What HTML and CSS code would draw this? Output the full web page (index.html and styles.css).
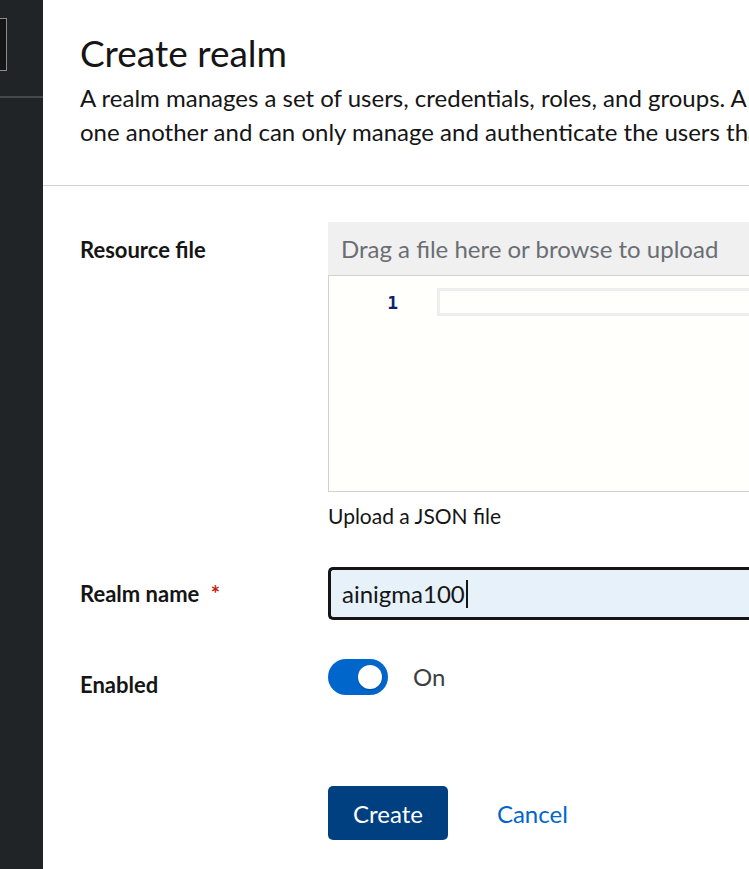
FILE: index.html
```html
<!DOCTYPE html>
<html lang="en">
<head>
<meta charset="utf-8">
<title>Create realm</title>
<link rel="stylesheet" href="styles.css">
</head>
<body>
<div class="app">
  <aside class="sidebar">
    <div class="brand-box"></div>
    <div class="sidebar-rule"></div>
  </aside>
  <main class="main">
    <div class="page">
      <header class="page-header">
        <h1 class="title">Create realm</h1>
        <p class="description">A realm manages a set of users, credentials, roles, and groups. A user belongs to and logs into a realm. Realms are isolated from<br>one another and can only manage and authenticate the users that they control.</p>
      </header>
      <section class="page-body">
        <form class="form">
          <div class="form-row">
            <label class="form-label">Resource file</label>
            <div class="form-control">
              <div class="file-upload">
                <div class="file-input">Drag a file here or browse to upload</div>
                <div class="editor">
                  <div class="gutter"><span class="line-number">1</span></div>
                  <div class="editor-lines"><div class="active-line"></div></div>
                </div>
              </div>
              <div class="helper">Upload a JSON file</div>
            </div>
          </div>
          <div class="form-row">
            <label class="form-label label-input">Realm name <span class="required">*</span></label>
            <div class="form-control">
              <div class="text-input"><span class="value">ainigma100</span><span class="caret"></span></div>
            </div>
          </div>
          <div class="form-row">
            <label class="form-label label-switch">Enabled</label>
            <div class="form-control">
              <div class="switch">
                <span class="toggle"><span class="knob"></span></span>
                <span class="switch-label">On</span>
              </div>
            </div>
          </div>
          <div class="form-row actions-row">
            <div></div>
            <div class="actions">
              <button type="button" class="btn btn-primary">Create</button>
              <button type="button" class="btn btn-link">Cancel</button>
            </div>
          </div>
        </form>
      </section>
    </div>
  </main>
</div>
</body>
</html>
```
FILE: styles.css
```css
html, body {
  margin: 0;
  padding: 0;
  height: 100%;
  overflow: hidden;
  background: #ffffff;
}

body {
  font-family: "Lato", "Open Sans", sans-serif;
  color: #151515;
}

.app {
  display: flex;
  height: 100vh;
}

.sidebar {
  width: 43px;
  flex: 0 0 43px;
  background: #212427;
  display: flex;
  flex-direction: column;
}

.brand-box {
  margin-top: 18px;
  width: 6px;
  height: 51px;
  background: #151515;
  border: 1px solid #8a8d90;
  border-left: none;
}

.sidebar-rule {
  margin-top: 25px;
  height: 2px;
  background: #45484b;
}

.main {
  flex: 1;
  min-width: 0;
  overflow: hidden;
}

.page {
  width: 1400px;
}

.page-header {
  padding: 30px 37px 36px;
  border-bottom: 1px solid #d2d2d2;
}

.title {
  margin: 0;
  font-size: 37px;
  font-weight: 400;
  line-height: 46px;
}

.description {
  margin: 5px 0 0;
  font-size: 24px;
  line-height: 34px;
  white-space: nowrap;
}

.page-body {
  padding: 36px 37px;
}

.form {
  display: flex;
  flex-direction: column;
  gap: 36px;
}

.form-row {
  display: grid;
  grid-template-columns: 224px 1fr;
  column-gap: 24px;
  align-items: start;
}

.form-label {
  font-size: 22px;
  font-weight: 700;
  line-height: 31px;
  padding-top: 12px;
}

.label-input {
  padding-top: 11px;
}

.label-switch {
  padding-top: 13px;
}

.required {
  color: #c9190b;
  margin-left: 6px;
}

.file-upload {
  display: flex;
  flex-direction: column;
}

.file-input {
  height: 53px;
  background: #f0f0f0;
  color: #6a6e73;
  font-size: 24px;
  line-height: 53px;
  padding-left: 13px;
  box-sizing: border-box;
}

.editor {
  height: 217px;
  box-sizing: border-box;
  border: 1px solid #d2d2d2;
  background: #fffffc;
  display: flex;
}

.gutter {
  width: 108px;
  flex: 0 0 108px;
  padding-top: 13px;
  box-sizing: border-box;
  text-align: right;
  padding-right: 39px;
}

.line-number {
  font-family: "DejaVu Sans Mono", "Liberation Mono", monospace;
  font-size: 18px;
  font-weight: 700;
  line-height: 28px;
  color: #0b216f;
}

.editor-lines {
  flex: 1;
  padding-top: 12px;
}

.active-line {
  height: 28px;
  box-sizing: border-box;
  border: 3px solid #eeeeee;
  border-right: none;
}

.helper {
  font-size: 21px;
  line-height: 31px;
  margin-top: 8px;
  color: #151515;
}

.text-input {
  height: 53px;
  box-sizing: border-box;
  background: #e7f1fa;
  border: 3px solid #151515;
  border-right: none;
  border-radius: 5px 0 0 5px;
  padding-left: 11px;
  display: flex;
  align-items: center;
  font-size: 24px;
}

.caret {
  display: inline-block;
  width: 2px;
  height: 28px;
  background: #151515;
  margin-left: 1px;
}

.switch {
  display: flex;
  align-items: center;
  gap: 25px;
  margin-top: 3px;
}

.toggle {
  position: relative;
  width: 60px;
  height: 36px;
  border-radius: 18px;
  background: #0066cc;
  display: inline-block;
}

.knob {
  position: absolute;
  top: 6px;
  right: 6px;
  width: 24px;
  height: 24px;
  border-radius: 50%;
  background: #ffffff;
  box-shadow: 0 1px 2px rgba(0, 0, 0, 0.25);
}

.switch-label {
  font-size: 24px;
  color: #3c3f42;
  line-height: 36px;
}

.actions-row {
  margin-top: 50px;
}

.actions {
  display: flex;
  gap: 24px;
}

.btn {
  font-family: inherit;
  font-size: 24px;
  height: 54px;
  padding: 0 25px;
  border: none;
  border-radius: 5px;
  cursor: pointer;
}

.btn-primary {
  background: #004080;
  color: #ffffff;
}

.btn-link {
  background: transparent;
  color: #0066cc;
}
```
